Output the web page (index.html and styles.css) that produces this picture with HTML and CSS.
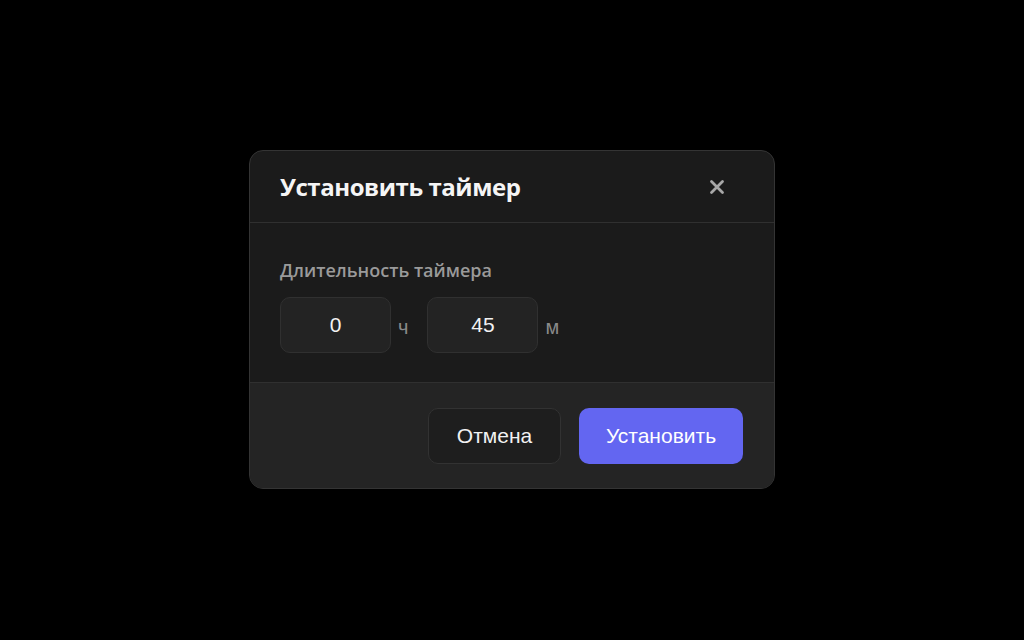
FILE: index.html
```html
<!DOCTYPE html>
<html lang="ru">
<head>
<meta charset="utf-8">
<link rel="stylesheet" href="styles.css">
</head>
<body>
<div class="overlay">
  <div class="modal">
    <div class="modal-header">
      <h2 class="title">Установить таймер</h2>
      <button class="close" aria-label="Закрыть">
        <svg width="16" height="16" viewBox="0 0 16 16"><path d="M2.5 2.5 L13.5 13.5 M13.5 2.5 L2.5 13.5" stroke="#a8a8a8" stroke-width="2.8" stroke-linecap="round"/></svg>
      </button>
    </div>
    <div class="modal-body">
      <div class="label">Длительность таймера</div>
      <div class="fields">
        <div class="field"><div class="num">0</div><span class="unit">ч</span></div>
        <div class="field"><div class="num">45</div><span class="unit">м</span></div>
      </div>
    </div>
    <div class="modal-footer">
      <button class="btn btn-cancel">Отмена</button>
      <button class="btn btn-primary">Установить</button>
    </div>
  </div>
</div>
</body>
</html>
```

FILE: styles.css
```css
* { box-sizing: border-box; }
html, body { margin: 0; height: 100%; background: #000; }
body { font-family: "Liberation Sans", Arial, sans-serif; }
.overlay {
  height: 640px;
  padding-bottom: 1px;
  display: flex;
  align-items: center;
  justify-content: center;
}
.modal {
  width: 526px;
  height: 339px;
  background: #1b1b1b;
  border: 1px solid #343434;
  border-radius: 14px;
  overflow: hidden;
  display: flex;
  flex-direction: column;
}
.modal-header {
  height: 72px;
  padding: 0 31px 0 30px;
  display: flex;
  align-items: center;
  justify-content: space-between;
  border-bottom: 1px solid #303030;
}
.title {
  margin: 0;
  font-family: "Open Sans", sans-serif;
  font-weight: 700;
  font-size: 24px;
  color: #f5f5f5;
  letter-spacing: -0.45px;
}
.close {
  background: none;
  border: 0;
  padding: 0;
  width: 24px;
  height: 24px;
  display: flex;
  align-items: center;
  justify-content: center;
  margin-right: 14px;
}
.modal-body {
  height: 160px;
  padding: 35px 30px 0;
  border-bottom: 1px solid #303030;
}
.label {
  font-family: "Open Sans", sans-serif;
  font-weight: 600;
  font-size: 18px;
  color: #9a9a9a;
  line-height: 24px;
  margin-bottom: 15px;
}
.fields { display: flex; gap: 19px; }
.field { display: flex; align-items: center; gap: 7px; }
.num {
  width: 111px;
  height: 56px;
  background: #232323;
  border: 1px solid #303030;
  border-radius: 10px;
  display: flex;
  align-items: center;
  justify-content: center;
  font-size: 21px;
  color: #f2f2f2;
}
.unit {
  font-size: 20px;
  color: #8a8a8a;
  padding-top: 4px;
}
.modal-footer {
  flex: 1;
  background: #242424;
  padding: 25px 31px 0 30px;
  display: flex;
  justify-content: flex-end;
  align-items: flex-start;
  gap: 18px;
}
.btn {
  height: 56px;
  border-radius: 10px;
  font-family: "Liberation Sans", Arial, sans-serif;
  font-size: 21px;
  cursor: pointer;
}
.btn-cancel {
  width: 133px;
  background: #1e1e1e;
  border: 1px solid #323232;
  color: #f2f2f2;
}
.btn-primary {
  width: 164px;
  background: #6366f1;
  border: 0;
  color: #fff;
}
```
